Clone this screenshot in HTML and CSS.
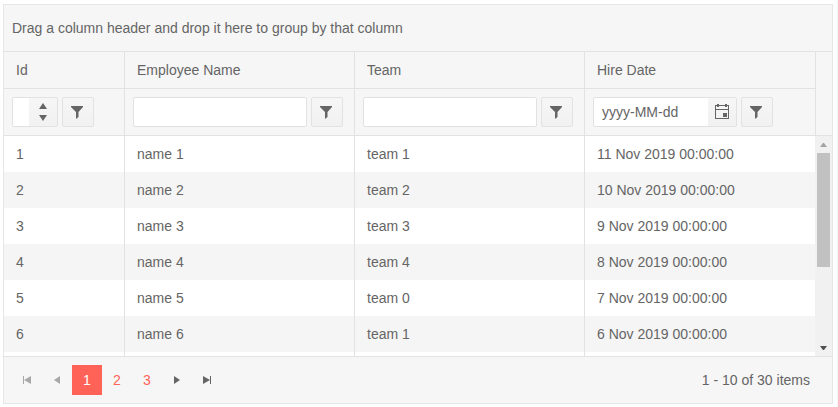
FILE: index.html
```html
<!doctype html>
<html lang="en">
<head>
  <meta charset="utf-8">
  <title>Employees</title>
  <link rel="stylesheet" href="styles.css">
</head>
<body>
  <!-- Shared icons -->
  <svg class="icon-defs" width="0" height="0" aria-hidden="true">
    <symbol id="icon-filter" viewBox="0 0 16 16"><path d="M1 2h12v1L8.500 8v5L6 15V8L1 3z"/></symbol>
    <symbol id="icon-calendar" viewBox="0 0 16 16"><path fill-rule="evenodd" d="M1 1h2V0h2v1h6V0h2v1h2v14H1zM2 2v3h12V2h-1v1h-2V2H5v1H3V2zM2 6v8h12V6zM9 9h4v4H9z"/></symbol>
    <symbol id="icon-up" viewBox="0 0 8 6"><path d="M4 0l4 6H0z"/></symbol>
    <symbol id="icon-down" viewBox="0 0 8 6"><path d="M0 0h8L4 6z"/></symbol>
    <symbol id="icon-first" viewBox="0 0 8 8"><path d="M0 0h1v8H0zM8 0v8L1 4z"/></symbol>
    <symbol id="icon-prev" viewBox="0 0 8 8"><path d="M7 0v8L1 4z"/></symbol>
    <symbol id="icon-next" viewBox="0 0 8 8"><path d="M1 0l6 4-6 4z"/></symbol>
    <symbol id="icon-last" viewBox="0 0 8 8"><path d="M0 0l7 4-7 4zM7 0h1v8H7z"/></symbol>
  </svg>

  <div class="grid">
    <div class="group-header">Drag a column header and drop it here to group by that column</div>

    <div class="grid-header">
      <table>
        <colgroup><col class="col-id"><col class="col-name"><col class="col-team"><col></colgroup>
        <thead>
          <tr>
            <th scope="col">Id</th>
            <th scope="col">Employee Name</th>
            <th scope="col">Team</th>
            <th scope="col">Hire Date</th>
          </tr>
          <tr class="filter-row">
            <td>
              <div class="filter-cell">
                <div class="field field-number">
                  <input type="text" inputmode="numeric" aria-label="Filter by id">
                  <div class="spinner">
                    <button type="button" aria-label="Increase"><svg width="8" height="6"><use href="#icon-up"/></svg></button>
                    <button type="button" aria-label="Decrease"><svg width="8" height="6"><use href="#icon-down"/></svg></button>
                  </div>
                </div>
                <button class="filter-button" type="button" aria-label="Id filter options"><svg width="16" height="16"><use href="#icon-filter"/></svg></button>
              </div>
            </td>
            <td>
              <div class="filter-cell">
                <div class="field"><input type="text" aria-label="Filter by employee name"></div>
                <button class="filter-button" type="button" aria-label="Employee name filter options"><svg width="16" height="16"><use href="#icon-filter"/></svg></button>
              </div>
            </td>
            <td>
              <div class="filter-cell">
                <div class="field"><input type="text" aria-label="Filter by team"></div>
                <button class="filter-button" type="button" aria-label="Team filter options"><svg width="16" height="16"><use href="#icon-filter"/></svg></button>
              </div>
            </td>
            <td>
              <div class="filter-cell">
                <div class="field field-date">
                  <input type="text" value="yyyy-MM-dd" aria-label="Filter by hire date">
                  <button class="calendar-button" type="button" aria-label="Open calendar"><svg width="16" height="16"><use href="#icon-calendar"/></svg></button>
                </div>
                <button class="filter-button" type="button" aria-label="Hire date filter options"><svg width="16" height="16"><use href="#icon-filter"/></svg></button>
              </div>
            </td>
          </tr>
        </thead>
      </table>
    </div>

    <div class="grid-content">
      <div class="rows">
        <table>
          <colgroup><col class="col-id"><col class="col-name"><col class="col-team"><col></colgroup>
          <tbody>
            <tr><td>1</td><td>name 1</td><td>team 1</td><td>11 Nov 2019 00:00:00</td></tr>
            <tr><td>2</td><td>name 2</td><td>team 2</td><td>10 Nov 2019 00:00:00</td></tr>
            <tr><td>3</td><td>name 3</td><td>team 3</td><td>9 Nov 2019 00:00:00</td></tr>
            <tr><td>4</td><td>name 4</td><td>team 4</td><td>8 Nov 2019 00:00:00</td></tr>
            <tr><td>5</td><td>name 5</td><td>team 0</td><td>7 Nov 2019 00:00:00</td></tr>
            <tr><td>6</td><td>name 6</td><td>team 1</td><td>6 Nov 2019 00:00:00</td></tr>
            <tr><td></td><td></td><td></td><td></td></tr>
          </tbody>
        </table>
      </div>
      <div class="scrollbar" aria-hidden="true">
        <div class="scroll-arrow"><svg width="7" height="4"><path d="M3 0h1l3 4H0z"/></svg></div>
        <div class="scroll-track"><div class="scroll-thumb"></div></div>
        <div class="scroll-arrow scroll-arrow-down"><svg width="7" height="4"><path d="M0 0h7L4 4H3z"/></svg></div>
      </div>
    </div>

    <div class="pager">
      <nav class="pages" aria-label="Pages">
        <button type="button" disabled aria-label="First page"><svg width="8" height="8"><use href="#icon-first"/></svg></button>
        <button type="button" disabled aria-label="Previous page"><svg width="8" height="8"><use href="#icon-prev"/></svg></button>
        <a class="current" href="#1" aria-current="page">1</a>
        <a href="#2">2</a>
        <a href="#3">3</a>
        <button type="button" aria-label="Next page"><svg width="8" height="8"><use href="#icon-next"/></svg></button>
        <button type="button" aria-label="Last page"><svg width="8" height="8"><use href="#icon-last"/></svg></button>
      </nav>
      <span class="pager-info">1 - 10 of 30 items</span>
    </div>
  </div>
</body>
</html>
```
FILE: styles.css
```css
/* ========== Base ========== */
* {
  box-sizing: border-box;
}

body {
  min-height: 100vh;
  margin: 0;
  padding: 4px 4px 3px 3px;
  border-right: 1px solid #f5f5f5;
  background: #fff;
  color: #656565;
  font: 14px/20px "Liberation Sans", Arial, sans-serif;
}

button,
input {
  margin: 0;
  padding: 0;
  border: 0;
  background: none;
  color: inherit;
  font: inherit;
}

button {
  display: flex;
  align-items: center;
  justify-content: center;
}

svg {
  display: block;
  fill: currentColor;
}

.icon-defs {
  position: absolute;
}

/* ========== Grid ========== */
.grid {
  border: 1px solid #e6e6e6;
  background: #f6f6f6;
}

.group-header {
  padding: 13px 8px;
  border-bottom: 1px solid #e2e2e2;
}

table {
  width: 100%;
  table-layout: fixed;
  border-collapse: separate;
  border-spacing: 0;
}

.col-id {
  width: 120px;
}

.col-name,
.col-team {
  width: 230px;
}

th,
td {
  padding: 8px 12px;
  border-left: 1px solid #e2e2e2;
  font-weight: normal;
  text-align: left;
}

th:first-child,
td:first-child {
  border-left: 0;
}

/* ========== Header and filters ========== */
.grid-header {
  padding-right: 16px;
  border-bottom: 1px solid #e2e2e2;
}

.grid-header table {
  border-right: 1px solid #e2e2e2;
}

.grid-header th {
  border-bottom: 1px solid #e2e2e2;
}

.filter-row td {
  padding: 8px 11px 8px 8px;
}

.filter-cell {
  display: flex;
  gap: 4px;
}

.field {
  display: flex;
  flex: 1;
  height: 30px;
  border: 1px solid #e2e2e2;
  border-radius: 2px;
  background: #fff;
  overflow: hidden;
}

.field input {
  flex: 1;
  min-width: 0;
  padding: 0 8px;
}

.field-number {
  flex: 0 0 46px;
}

.field-number input {
  padding: 0;
}

.field-date {
  flex: 0 0 144px;
}

.spinner,
.calendar-button {
  width: 28px;
  background: #f5f5f5 linear-gradient(#f6f6f6, #f1f1f1);
}

.spinner button {
  width: 28px;
  height: 14px;
  padding-top: 2px;
}

.spinner button:last-child {
  padding: 0 0 2px;
}

.filter-button {
  width: 32px;
  height: 30px;
  border: 1px solid #e2e2e2;
  border-radius: 2px;
  background: linear-gradient(#f6f6f6, #f1f1f1);
}

/* ========== Rows ========== */
.grid-content {
  display: flex;
  height: 220px;
  background: #fff;
}

.rows {
  flex: 1;
  overflow: hidden;
}

.rows tr {
  height: 36px;
}

.rows tr:nth-child(even) {
  background: #f5f5f5;
}

/* ========== Scrollbar ========== */
.scrollbar {
  display: flex;
  flex-direction: column;
  width: 17px;
  background: #f1f1f1;
}

.scroll-arrow {
  display: flex;
  align-items: center;
  justify-content: center;
  height: 17px;
  color: #a3a3a3;
}

.scroll-arrow-down {
  color: #505050;
}

.scroll-track {
  flex: 1;
  padding: 0 2px;
}

.scroll-thumb {
  height: 114px;
  background: #c1c1c1;
}

/* ========== Pager ========== */
.pager {
  display: flex;
  align-items: center;
  justify-content: space-between;
  padding: 8px 22px 8px 8px;
  border-top: 1px solid #e2e2e2;
}

.pages {
  display: flex;
}

.pages a,
.pages button {
  width: 30px;
  height: 30px;
}

.pages a {
  color: #ff6358;
  line-height: 30px;
  text-align: center;
  text-decoration: none;
}

.pages .current {
  background: #ff6358;
  color: #fff;
}

.pages button:disabled {
  color: #a8a8a8;
}
```
